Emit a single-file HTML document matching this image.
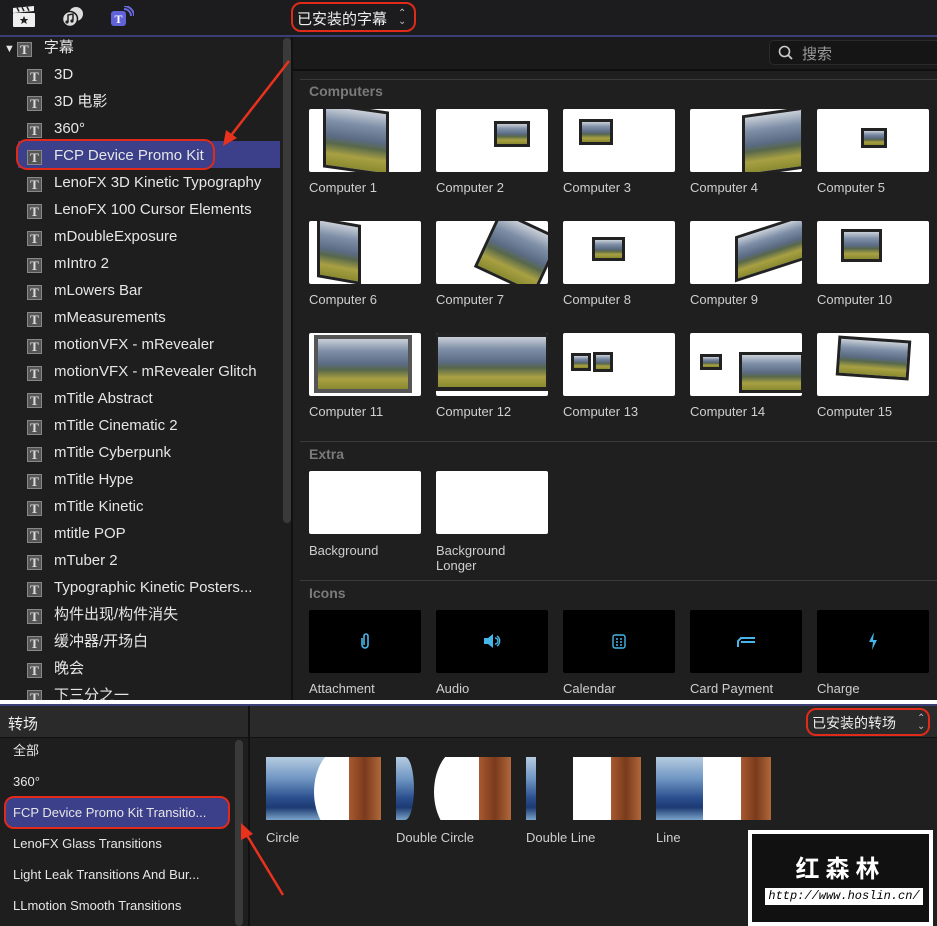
<!DOCTYPE html>
<html><head><meta charset="utf-8"><style>
*{margin:0;padding:0;box-sizing:border-box}
body{width:937px;height:926px;background:#1f1f1f;position:relative;overflow:hidden;font-family:"Liberation Sans","Noto Sans CJK SC",sans-serif;color:#ddd}
.a{position:absolute}
.li{position:absolute;left:27px;font-size:15px;color:#e6e6e6;height:27px;line-height:27px;white-space:nowrap}
.li i{display:inline-block;width:15px;height:15px;border:1px solid #888;background:#555;color:#ddd;font-style:normal;font-family:"Liberation Serif",serif;font-size:13px;line-height:13px;text-align:center;vertical-align:-2px;margin-right:12px;font-weight:bold}
.th{position:absolute;width:112px;height:63px;background:#fff;border-radius:2px;overflow:hidden}
.lb{position:absolute;font-size:13px;color:#cfcfcf;line-height:15px}
.m{position:absolute;border:3px solid #222;background:linear-gradient(180deg,#c9cfd8 0%,#7d8ea6 25%,#5b6b84 50%,#58684a 62%,#a8a043 80%,#8a8a30 100%)}
.hd{position:absolute;left:309px;font-size:14px;font-weight:bold;color:#7a7a7a}
.sep{position:absolute;left:300px;right:0;height:1px;background:#3a3a3a}
.ic{position:absolute;width:112px;height:63px;background:#000;border-radius:2px;color:#46b6e8;text-align:center;line-height:63px;font-size:16px}
.bi{position:absolute;left:13px;font-size:13px;color:#e6e6e6;height:31px;line-height:31px}
.tt{position:absolute;top:757px;height:63px;overflow:hidden}
.bl{background:linear-gradient(180deg,#b5cbe0 0%,#6e95c2 35%,#2b4f8e 65%,#1d3a72 80%,#7aa3c9 100%)}
.br{background:linear-gradient(90deg,#a85a30,#7a3a1c 50%,#b0683a)}
</style></head><body>
<div class="a" style="left:0;top:0;width:937px;height:35px;background:#1c1c1e"></div>
<div class="a" style="left:0;top:35px;width:937px;height:2px;background:#3a3f78"></div>
<svg class="a" style="left:12px;top:6px" width="24" height="22" viewBox="0 0 24 22"><rect x="1" y="7" width="22" height="14" rx="1" fill="#eee"/><path d="M1 2 L22 0 L22 5 L1 7Z" fill="#eee"/><path d="M5 1.6l2 4M10 1.2l2 4M15 .8l2 4" stroke="#222" stroke-width="1.5"/><path d="M12 10l1.3 3h3l-2.4 2 1 3-2.9-1.8-2.9 1.8 1-3-2.4-2h3z" fill="#222"/></svg>
<svg class="a" style="left:61px;top:6px" width="24" height="22" viewBox="0 0 24 22"><circle cx="15" cy="8" r="7" fill="#ddd"/><circle cx="9" cy="13" r="7.5" fill="#ddd" stroke="#1c1c1e" stroke-width="1.5"/><path d="M7 16V9l5-1v6" stroke="#222" stroke-width="1.5" fill="none"/><circle cx="6" cy="16" r="1.6" fill="#222"/><circle cx="11" cy="15" r="1.6" fill="#222"/></svg>
<svg class="a" style="left:110px;top:6px" width="24" height="22" viewBox="0 0 24 22"><path d="M14 3a7 7 0 0 1 7 7M14 0a10 10 0 0 1 10 10" stroke="#6a6ae0" stroke-width="2" fill="none"/><rect x="1" y="5" width="15" height="15" rx="3" fill="#6262d8"/><text x="8.5" y="17" font-family="Liberation Serif" font-size="12" font-weight="bold" fill="#fff" text-anchor="middle">T</text></svg>
<div class="a" style="left:291px;top:2px;width:125px;height:30px;border:2px solid #e02a1a;border-radius:10px"></div>
<div class="a" style="left:297px;top:8px;font-size:15px;color:#eee">已安装的字幕</div>
<div class="a" style="left:398px;top:10px;font-size:10px;color:#bbb;line-height:8px">⌃<br>⌄</div>

<div class="a" style="left:0;top:37px;width:291px;height:664px;background:#1e1e1e"></div>
<div class="a" style="left:283px;top:38px;width:8px;height:485px;background:#3a3a3a;border-radius:4px"></div>
<div class="a" style="left:291px;top:37px;width:2px;height:664px;background:#111"></div>
<div class="a" style="left:18px;top:141px;width:262px;height:27px;background:#3c3f8a"></div>
<div class="li" style="left:4px;top:34px"><span style="font-size:11px;margin-right:2px">▼</span><i>T</i>字幕</div>
<div class="li" style="top:61px"><i>T</i>3D</div>
<div class="li" style="top:88px"><i>T</i>3D 电影</div>
<div class="li" style="top:115px"><i>T</i>360°</div>
<div class="li" style="top:142px"><i>T</i>FCP Device Promo Kit</div>
<div class="li" style="top:169px"><i>T</i>LenoFX 3D Kinetic Typography</div>
<div class="li" style="top:196px"><i>T</i>LenoFX 100 Cursor Elements</div>
<div class="li" style="top:223px"><i>T</i>mDoubleExposure</div>
<div class="li" style="top:250px"><i>T</i>mIntro 2</div>
<div class="li" style="top:277px"><i>T</i>mLowers Bar</div>
<div class="li" style="top:304px"><i>T</i>mMeasurements</div>
<div class="li" style="top:331px"><i>T</i>motionVFX - mRevealer</div>
<div class="li" style="top:358px"><i>T</i>motionVFX - mRevealer Glitch</div>
<div class="li" style="top:385px"><i>T</i>mTitle Abstract</div>
<div class="li" style="top:412px"><i>T</i>mTitle Cinematic 2</div>
<div class="li" style="top:439px"><i>T</i>mTitle Cyberpunk</div>
<div class="li" style="top:466px"><i>T</i>mTitle Hype</div>
<div class="li" style="top:493px"><i>T</i>mTitle Kinetic</div>
<div class="li" style="top:520px"><i>T</i>mtitle POP</div>
<div class="li" style="top:547px"><i>T</i>mTuber 2</div>
<div class="li" style="top:574px"><i>T</i>Typographic Kinetic Posters...</div>
<div class="li" style="top:601px"><i>T</i>构件出现/构件消失</div>
<div class="li" style="top:628px"><i>T</i>缓冲器/开场白</div>
<div class="li" style="top:655px"><i>T</i>晚会</div>
<div class="li" style="top:682px"><i>T</i>下三分之一</div>
<div class="a" style="left:16px;top:139px;width:199px;height:31px;border:2.5px solid #e02a1a;border-radius:11px"></div>
<svg class="a" style="left:215px;top:58px" width="80" height="90"><path d="M74 3 L14 80" stroke="#e8321e" stroke-width="2.5"/><path d="M8 88 L11 72 L22 80Z" fill="#e8321e"/></svg>

<div class="a" style="left:293px;top:37px;width:644px;height:32px;background:#1a1a1a"></div>
<div class="a" style="left:293px;top:69px;width:644px;height:2px;background:#0f0f0f"></div>
<div class="a" style="left:769px;top:40px;width:175px;height:25px;background:#151515;border-radius:5px;border:1px solid #2a2a2a"></div>
<svg class="a" style="left:778px;top:45px" width="16" height="16"><circle cx="6.5" cy="6.5" r="5" stroke="#ccc" stroke-width="1.6" fill="none"/><path d="M10 10l4 4" stroke="#ccc" stroke-width="1.8"/></svg>
<div class="a" style="left:802px;top:43px;font-size:15px;color:#999">搜索</div>
<div class="sep" style="top:79px"></div>
<div class="hd" style="top:83px">Computers</div>

<div class="th" style="left:309px;top:109px"><div class="m" style="left:14px;top:-2px;width:66px;height:65px;transform:skewY(8deg)"></div></div>
<div class="th" style="left:436px;top:109px"><div class="m" style="left:58px;top:12px;width:36px;height:26px"></div></div>
<div class="th" style="left:563px;top:109px"><div class="m" style="left:16px;top:10px;width:34px;height:26px"></div></div>
<div class="th" style="left:690px;top:109px"><div class="m" style="left:52px;top:2px;width:62px;height:62px;transform:skewY(-8deg)"></div></div>
<div class="th" style="left:817px;top:109px"><div class="m" style="left:44px;top:19px;width:26px;height:20px"></div></div>
<div class="lb" style="left:309px;top:180px">Computer 1</div><div class="lb" style="left:436px;top:180px">Computer 2</div><div class="lb" style="left:563px;top:180px">Computer 3</div><div class="lb" style="left:690px;top:180px">Computer 4</div><div class="lb" style="left:817px;top:180px">Computer 5</div>

<div class="th" style="left:309px;top:221px"><div class="m" style="left:8px;top:0;width:44px;height:60px;transform:skewY(10deg)"></div></div>
<div class="th" style="left:436px;top:221px"><div class="m" style="left:48px;top:0;width:67px;height:63px;transform:rotate(25deg)"></div></div>
<div class="th" style="left:563px;top:221px"><div class="m" style="left:29px;top:16px;width:33px;height:24px"></div></div>
<div class="th" style="left:690px;top:221px"><div class="m" style="left:45px;top:4px;width:70px;height:46px;transform:skewY(-18deg)"></div></div>
<div class="th" style="left:817px;top:221px"><div class="m" style="left:24px;top:8px;width:41px;height:33px"></div></div>
<div class="lb" style="left:309px;top:292px">Computer 6</div><div class="lb" style="left:436px;top:292px">Computer 7</div><div class="lb" style="left:563px;top:292px">Computer 8</div><div class="lb" style="left:690px;top:292px">Computer 9</div><div class="lb" style="left:817px;top:292px">Computer 10</div>

<div class="th" style="left:309px;top:333px"><div class="m" style="left:5px;top:2px;width:98px;height:58px;border-width:4px;border-color:#555"></div></div>
<div class="th" style="left:436px;top:333px"><div class="m" style="left:-2px;top:0;width:116px;height:58px;border-width:4px"></div></div>
<div class="th" style="left:563px;top:333px"><div class="m" style="left:8px;top:20px;width:20px;height:18px"></div><div class="m" style="left:30px;top:19px;width:20px;height:20px"></div></div>
<div class="th" style="left:690px;top:333px"><div class="m" style="left:10px;top:21px;width:22px;height:16px"></div><div class="m" style="left:49px;top:19px;width:65px;height:41px"></div></div>
<div class="th" style="left:817px;top:333px"><div class="m" style="left:20px;top:5px;width:73px;height:40px;transform:rotate(4deg)"></div></div>
<div class="lb" style="left:309px;top:404px">Computer 11</div><div class="lb" style="left:436px;top:404px">Computer 12</div><div class="lb" style="left:563px;top:404px">Computer 13</div><div class="lb" style="left:690px;top:404px">Computer 14</div><div class="lb" style="left:817px;top:404px">Computer 15</div>

<div class="sep" style="top:441px"></div>
<div class="hd" style="top:446px">Extra</div>
<div class="th" style="left:309px;top:471px"></div>
<div class="th" style="left:436px;top:471px"></div>
<div class="lb" style="left:309px;top:543px">Background</div>
<div class="lb" style="left:436px;top:543px">Background<br>Longer</div>
<div class="sep" style="top:580px"></div>
<div class="hd" style="top:585px">Icons</div>
<div class="ic" style="left:309px;top:610px">
<svg width="12" height="18" style="margin-top:22px" viewBox="0 0 12 18"><path d="M3 6v7a3 3 0 0 0 6 0V4a2 2 0 0 0-4 0v9" stroke="#46b6e8" stroke-width="1.6" fill="none"/></svg></div>
<div class="ic" style="left:436px;top:610px"><svg width="18" height="16" style="margin-top:23px" viewBox="0 0 18 16"><path d="M1 5h4l5-4v14l-5-4H1z" fill="#46b6e8"/><path d="M12 5a3 3 0 0 1 0 6M14 3a6 6 0 0 1 0 10" stroke="#46b6e8" stroke-width="1.4" fill="none"/></svg></div>
<div class="ic" style="left:563px;top:610px"><svg width="14" height="16" style="margin-top:23px" viewBox="0 0 14 16"><rect x="1" y="2" width="12" height="13" rx="2" stroke="#46b6e8" stroke-width="1.4" fill="none"/><path d="M4 6h2M8 6h2M4 9h2M8 9h2M4 12h2M8 12h2" stroke="#46b6e8" stroke-width="1.6"/></svg></div>
<div class="ic" style="left:690px;top:610px"><svg width="20" height="12" style="margin-top:26px" viewBox="0 0 20 12"><path d="M2 11V5l3-3h14M5 6h14" stroke="#46b6e8" stroke-width="2" fill="none"/></svg></div>
<div class="ic" style="left:817px;top:610px"><svg width="10" height="18" style="margin-top:22px" viewBox="0 0 10 18"><path d="M6 0L1 10h4l-1 8 5-10H5z" fill="#46b6e8"/></svg></div>
<div class="lb" style="left:309px;top:681px">Attachment</div><div class="lb" style="left:436px;top:681px">Audio</div><div class="lb" style="left:563px;top:681px">Calendar</div><div class="lb" style="left:690px;top:681px">Card Payment</div><div class="lb" style="left:817px;top:681px">Charge</div>

<div class="a" style="left:0;top:700px;width:937px;height:4px;background:#fff"></div>
<div class="a" style="left:0;top:704px;width:937px;height:2px;background:#3a3f78"></div>
<div class="a" style="left:0;top:706px;width:937px;height:31px;background:#2a2a2a"></div>
<div class="a" style="left:248px;top:706px;width:2px;height:220px;background:#111"></div>
<div class="a" style="left:0;top:737px;width:248px;height:189px;background:#1e1e1e"></div>
<div class="a" style="left:0;top:737px;width:937px;height:1px;background:#111"></div>
<div class="a" style="left:8px;top:713px;font-size:15px;color:#eee">转场</div>
<div class="a" style="left:806px;top:708px;width:124px;height:28px;border:2.5px solid #e02a1a;border-radius:10px"></div>
<div class="a" style="left:812px;top:713px;font-size:14px;color:#eee">已安装的转场</div>
<div class="a" style="left:917px;top:715px;font-size:10px;color:#bbb;line-height:8px">⌃<br>⌄</div>
<div class="a" style="left:235px;top:740px;width:8px;height:186px;background:#3a3a3a;border-radius:4px"></div>
<div class="a" style="left:4px;top:796px;width:226px;height:33px;background:#3c3f8a;border:2.5px solid #e02a1a;border-radius:10px"></div>
<div class="bi" style="top:735px">全部</div>
<div class="bi" style="top:766px">360°</div>
<div class="bi" style="top:797px">FCP Device Promo Kit Transitio...</div>
<div class="bi" style="top:828px">LenoFX Glass Transitions</div>
<div class="bi" style="top:859px">Light Leak Transitions And Bur...</div>
<div class="bi" style="top:890px">LLmotion Smooth Transitions</div>
<svg class="a" style="left:235px;top:820px" width="55" height="80"><path d="M48 75 L10 12" stroke="#e8321e" stroke-width="2.5"/><path d="M6 3 L18 14 L6 20Z" fill="#e8321e"/></svg>

<div class="tt bl" style="left:266px;width:115px"><div class="a" style="left:48px;top:-10px;width:60px;height:90px;background:#fff;border-radius:50% 0 0 50%/50% 0 0 50%"></div><div class="a br" style="left:83px;top:0;width:32px;height:63px"></div></div>
<div class="tt" style="left:396px;width:115px;background:#1f1f1f"><div class="a bl" style="left:0;top:0;width:18px;height:63px;border-radius:0 50% 50% 0/0 50% 50% 0"></div><div class="a" style="left:38px;top:-10px;width:60px;height:90px;background:#fff;border-radius:50% 0 0 50%/50% 0 0 50%"></div><div class="a br" style="left:83px;top:0;width:32px;height:63px"></div></div>
<div class="tt" style="left:526px;width:115px;background:#1f1f1f"><div class="a bl" style="left:0;top:0;width:10px;height:63px"></div><div class="a" style="left:47px;top:0;width:38px;height:63px;background:#fff"></div><div class="a br" style="left:85px;top:0;width:30px;height:63px"></div></div>
<div class="tt bl" style="left:656px;width:115px"><div class="a" style="left:47px;top:0;width:38px;height:63px;background:#fff"></div><div class="a br" style="left:85px;top:0;width:30px;height:63px"></div></div>
<div class="lb" style="left:266px;top:830px">Circle</div><div class="lb" style="left:396px;top:830px">Double Circle</div><div class="lb" style="left:526px;top:830px">Double Line</div><div class="lb" style="left:656px;top:830px">Line</div>

<div class="a" style="left:748px;top:830px;width:185px;height:96px;background:#fff"></div>
<div class="a" style="left:752px;top:834px;width:177px;height:88px;background:#111"></div>
<div class="a" style="left:752px;top:849px;width:177px;text-align:center;font-size:24px;font-weight:bold;color:#fff;letter-spacing:6px;font-family:'Noto Sans CJK SC',sans-serif">红森林</div>
<div class="a" style="left:765px;top:888px;width:158px;height:17px;background:#fff;color:#000;font-size:12px;font-style:italic;font-family:'Liberation Mono',monospace;line-height:17px;text-align:center">http://www.hoslin.cn/</div>
</body></html>
